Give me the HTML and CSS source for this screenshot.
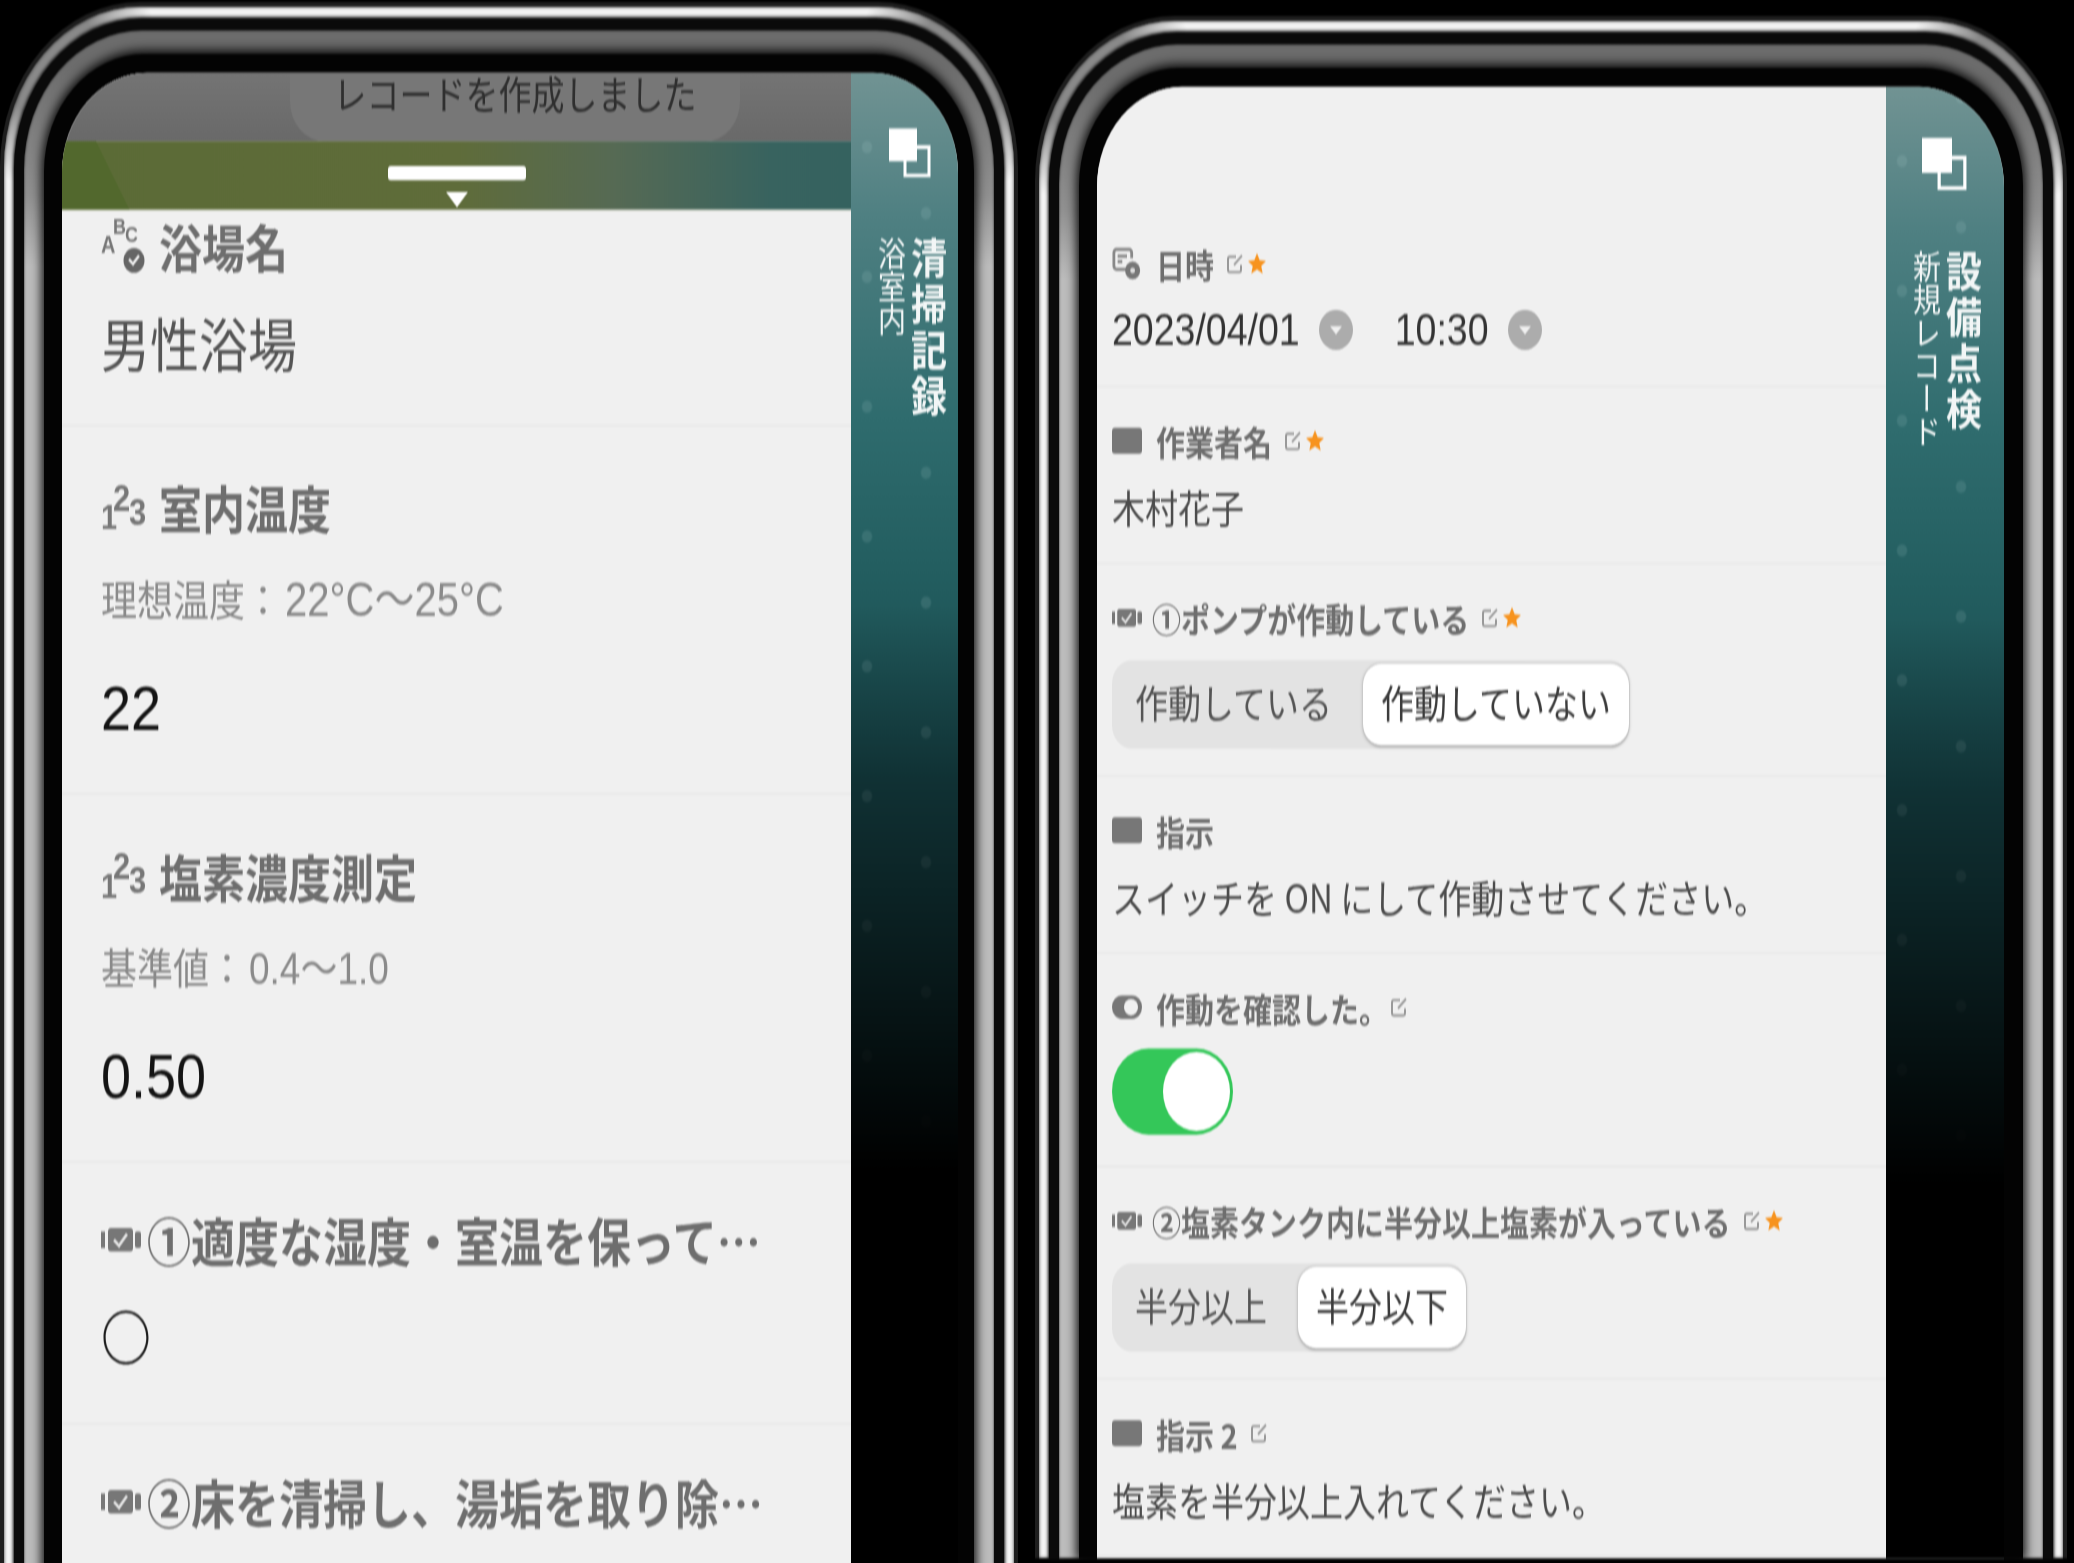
FILE: index.html
```html
<!DOCTYPE html>
<html lang="ja">
<head>
<meta charset="utf-8">
<title>記録</title>
<link rel="stylesheet" href="styles.css">
</head>
<body>
<svg class="defs" width="0" height="0" aria-hidden="true">
  <symbol id="i-check" viewBox="0 0 40 24">
    <rect x="0" y="5" width="4" height="14" fill="#777"/>
    <rect x="7" y="2" width="25" height="20" rx="3" fill="#777"/>
    <path d="M13 12l5 5 8-10" fill="none" stroke="#e4e4e4" stroke-width="2.6"/>
    <rect x="34" y="5" width="6" height="14" rx="2" fill="#777"/>
  </symbol>
  <symbol id="i-solid" viewBox="0 0 30 24">
    <rect x="0" y="1" width="30" height="22" rx="3" fill="#777"/>
  </symbol>
  <symbol id="i-date" viewBox="0 0 32 32">
    <path d="M15 21H5a3 3 0 0 1-3-3V6a3 3 0 0 1 3-3h13a3 3 0 0 1 3 3v5" fill="none" stroke="#888" stroke-width="3"/>
    <path d="M6 9h10M6 14h5" stroke="#888" stroke-width="3"/>
    <circle cx="22" cy="22" r="8" fill="#777"/>
    <circle cx="22" cy="22" r="2.5" fill="#ddd"/>
  </symbol>
  <symbol id="i-switch" viewBox="0 0 30 22">
    <rect x="0" y="1" width="30" height="20" rx="10" fill="#777"/>
    <circle cx="19" cy="11" r="7" fill="#f0f0f0"/>
  </symbol>
  <symbol id="i-edit" viewBox="0 0 18 18">
    <path d="M15 10v4a2 2 0 0 1-2 2H4a2 2 0 0 1-2-2V5a2 2 0 0 1 2-2h6" fill="none" stroke="#999" stroke-width="2"/>
    <path d="M8 10l8-8" stroke="#999" stroke-width="2"/>
  </symbol>
  <symbol id="i-star" viewBox="0 0 20 20">
    <path d="M10 1l2.7 6 6.3.6-4.8 4.2 1.5 6.4L10 14.8l-5.7 3.4 1.5-6.4L1 7.6 7.3 7z" fill="#f7931e"/>
  </symbol>
  <symbol id="i-caret" viewBox="0 0 34 34">
    <circle cx="17" cy="17" r="17" fill="#acacac"/>
    <path d="M11 14h12l-6 7z" fill="#f0f0f0"/>
  </symbol>
  <symbol id="i-copy" viewBox="0 0 42 42">
    <path d="M27 16h13v24H16V27" fill="none" stroke="#fff" stroke-width="3"/>
    <rect x="0" y="0" width="28" height="28" fill="#fff"/>
  </symbol>
</svg>

<section class="phone phone-left">
  <div class="ring ring-white">
    <div class="ring ring-black">
      <div class="ring ring-gray">
        <div class="ring bezel bezel-left">
          <div class="screen">
            <main class="main">
              <div class="toast-bar"><div class="toast">レコードを作成しました</div></div>
              <div class="banner"><span class="handle"></span><span class="handle-tip"></span></div>

              <div class="row-l row-first">
                <div class="label-l">
                  <svg class="ic-abc" viewBox="0 0 42 48">
                    <text x="0" y="31" class="ic-t" font-size="20">A</text>
                    <text x="12" y="15" class="ic-t" font-size="18">B</text>
                    <text x="24" y="21" class="ic-t" font-size="18">C</text>
                    <circle cx="33" cy="37" r="10.5" fill="#666"/>
                    <path d="M28 36l4 4 6-7" fill="none" stroke="#f0f0f0" stroke-width="2.4"/>
                  </svg>
                  <span>浴場名</span>
                </div>
                <div class="value-l">男性浴場</div>
              </div>
              <div class="row-l">
                <div class="label-l">
                  <svg class="ic-123" viewBox="0 0 46 44">
                    <text x="0" y="41" class="ic-t" font-size="29">1</text>
                    <text x="12" y="25" class="ic-t" font-size="31">2</text>
                    <text x="28" y="37" class="ic-t" font-size="31">3</text>
                  </svg>
                  <span>室内温度</span>
                </div>
                <div class="hint">理想温度：<span class="hint-wide">22°C〜25°C</span></div>
                <div class="num">22</div>
              </div>
              <div class="row-l">
                <div class="label-l">
                  <svg class="ic-123" viewBox="0 0 46 44">
                    <text x="0" y="41" class="ic-t" font-size="29">1</text>
                    <text x="12" y="25" class="ic-t" font-size="31">2</text>
                    <text x="28" y="37" class="ic-t" font-size="31">3</text>
                  </svg>
                  <span>塩素濃度測定</span>
                </div>
                <div class="hint">基準値：<span class="hint-num">0.4〜1.0</span></div>
                <div class="num">0.50</div>
              </div>
              <div class="row-l">
                <div class="label-l label-check"><svg class="ic-check-l"><use href="#i-check"/></svg><span>①適度な湿度・室温を保って…</span></div>
                <div class="mark">○</div>
              </div>
              <div class="row-l">
                <div class="label-l label-check"><svg class="ic-check-l"><use href="#i-check"/></svg><span>②床を清掃し、湯垢を取り除…</span></div>
              </div>
            </main>
            <aside class="side">
              <svg class="side-icon"><use href="#i-copy"/></svg>
              <div class="side-text"><div class="side-title">清掃記録</div><div class="side-sub">浴室内</div></div>
            </aside>
          </div>
        </div>
      </div>
    </div>
  </div>
</section>

<section class="phone phone-right">
  <div class="ring ring-white">
    <div class="ring ring-black">
      <div class="ring ring-gray">
        <div class="ring bezel bezel-right">
          <div class="screen">
            <main class="main">
              <div class="row-r row-date">
                <div class="label-r"><svg class="ic-r ic-date"><use href="#i-date"/></svg><span>日時</span><svg class="ic-edit"><use href="#i-edit"/></svg><svg class="ic-star"><use href="#i-star"/></svg></div>
                <div class="value-r datetime">
                  <span>2023/04/01</span><svg class="ic-caret"><use href="#i-caret"/></svg>
                  <span class="time">10:30</span><svg class="ic-caret"><use href="#i-caret"/></svg>
                </div>
              </div>
              <div class="row-r">
                <div class="label-r"><svg class="ic-r"><use href="#i-solid"/></svg><span>作業者名</span><svg class="ic-edit"><use href="#i-edit"/></svg><svg class="ic-star"><use href="#i-star"/></svg></div>
                <div class="value-r">木村花子</div>
              </div>
              <div class="row-r row-seg">
                <div class="label-r label-tight"><svg class="ic-r"><use href="#i-check"/></svg><span>①ポンプが作動している</span><svg class="ic-edit"><use href="#i-edit"/></svg><svg class="ic-star"><use href="#i-star"/></svg></div>
                <div class="seg"><div class="seg-off">作動している</div><div class="seg-on">作動していない</div></div>
              </div>
              <div class="row-r">
                <div class="label-r"><svg class="ic-r"><use href="#i-solid"/></svg><span>指示</span></div>
                <div class="value-r">スイッチを ON にして作動させてください。</div>
              </div>
              <div class="row-r row-toggle">
                <div class="label-r label-period"><svg class="ic-r"><use href="#i-switch"/></svg><span>作動を確認した。</span><svg class="ic-edit"><use href="#i-edit"/></svg></div>
                <div class="toggle"><span class="knob"></span></div>
              </div>
              <div class="row-r row-seg">
                <div class="label-r label-tight"><svg class="ic-r"><use href="#i-check"/></svg><span>②塩素タンク内に半分以上塩素が入っている</span><svg class="ic-edit"><use href="#i-edit"/></svg><svg class="ic-star"><use href="#i-star"/></svg></div>
                <div class="seg"><div class="seg-off">半分以上</div><div class="seg-on">半分以下</div></div>
              </div>
              <div class="row-r">
                <div class="label-r"><svg class="ic-r"><use href="#i-solid"/></svg><span>指示 2</span><svg class="ic-edit"><use href="#i-edit"/></svg></div>
                <div class="value-r">塩素を半分以上入れてください。</div>
              </div>
            </main>
            <aside class="side side-right">
              <svg class="side-icon"><use href="#i-copy"/></svg>
              <div class="side-text"><div class="side-title">設備点検</div><div class="side-sub">新規レコード</div></div>
            </aside>
          </div>
        </div>
      </div>
    </div>
  </div>
</section>
</body>
</html>
```

FILE: styles.css
```css
* { box-sizing: border-box; }
html, body { height: 1563px; overflow: hidden; }
body {
  margin: 0;
  background: #000;
  display: flex;
  gap: 17px;
  align-items: flex-start;
  font-family: "Noto Sans CJK JP", "Liberation Sans", sans-serif;
}
.defs { position: absolute; }
.ic-t { font-family: "Liberation Sans", sans-serif; fill: #777; }

/* Device frame: the whole photograph is stretched vertically */
.phone {
  flex: none;
  display: flex;
  padding: 4px 4px 0;
  background: #1e1e1e;
  border-radius: 140px 140px 0 0;
  transform: scaleY(1.18);
  transform-origin: top;
  filter: blur(0.7px);
}
.phone-left { width: 1018px; height: 1400px; margin-top: 2px; }
.phone-right { width: 1032px; height: 1307px; margin-top: 16px; }
.ring { display: flex; flex: 1; min-width: 0; }
.ring-white {
  background:
    radial-gradient(circle 110px at 45px 45px, #8a8a8a 45%, transparent 100%),
    radial-gradient(circle 110px at calc(100% - 45px) 45px, #8a8a8a 45%, transparent 100%),
    #f4f4f4;
  padding: 10px 10px 0;
  border-radius: 136px 136px 0 0;
  box-shadow: inset 0 0 3px #222;
}
.ring-black {
  background: #0a0a0a;
  padding: 10px 10px 0;
  border-radius: 128px 128px 0 0;
  box-shadow: 0 0 3px 1px #0a0a0a;
}
.ring-gray {
  background: linear-gradient(#6c6c6c, #6c6c6c 30px, #909090 140px, #bcbcbc 200px);
  padding: 20px 20px 0;
  border-radius: 118px 118px 0 0;
  box-shadow: inset 0 0 2px #000;
}
.bezel {
  background: #030303;
  padding: 16px 18px 0;
  border-radius: 100px 100px 0 0;
  box-shadow: 0 0 10px 2px #000;
}
.bezel-left { padding-right: 16px; }
.bezel-right { padding-right: 19px; }
.screen {
  flex: 1;
  display: flex;
  min-width: 0;
  overflow: hidden;
  border-radius: 85px 85px 0 0;
  background: #f0f0f0;
}
.main { flex: 1; min-width: 0; background: #f0f0f0; }

/* Toast & banner (left) */
.toast-bar {
  height: 58px;
  background: linear-gradient(#747474, #696969);
  padding-left: 228px;
}
.toast {
  width: 450px;
  height: 58px;
  background: #777;
  border-radius: 0 0 34px 34px;
  text-align: center;
  font-size: 33px;
  line-height: 35px;
  color: #2f2f2f;
}
.banner {
  height: 59px;
  background:
    linear-gradient(60deg, #52682d 0 58px, transparent 59px),
    linear-gradient(90deg, #5b6b36 0%, #5f6c3a 50%, #566a54 70%, #38635f 90%, #35625f 100%);
  display: flex;
  flex-direction: column;
  align-items: center;
  padding-top: 21px;
  border-bottom: 1px solid #cfd2c4;
}
.handle { width: 138px; height: 12px; background: #fff; border-radius: 3px; }
.handle-tip {
  margin-top: 10px;
  width: 0;
  height: 0;
  border-left: 11px solid transparent;
  border-right: 11px solid transparent;
  border-top: 13px solid #fff;
}

/* Rows (left) */
.row-l {
  padding: 43px 39px 42px;
  border-bottom: 2px solid #eaeaea;
}
.row-first { padding-top: 4px; }
.label-l {
  display: flex;
  align-items: center;
  gap: 16px;
  height: 50px;
  margin-bottom: 2px;
  font-size: 43px;
  line-height: 50px;
  font-weight: 700;
  color: #6e6e6e;
  white-space: nowrap;
}
.label-check { gap: 6px; font-size: 44px; margin-top: -3px; margin-bottom: 5px; }
.ic-abc { width: 42px; height: 48px; flex: none; overflow: visible; }
.ic-123 { width: 46px; height: 44px; flex: none; margin-right: -4px; overflow: visible; }
.ic-check-l { width: 40px; height: 24px; flex: none; }
.value-l { margin-top: 27px; margin-bottom: -2px; font-size: 49px; line-height: 60px; color: #555; }
.hint { height: 44px; margin-top: 29px; font-size: 36px; line-height: 44px; color: #8a8a8a; white-space: nowrap; }
.hint-wide { font-family: "Liberation Sans", "Noto Sans CJK JP", sans-serif; font-size: 40px; margin-left: 4px; }
.hint-num { font-family: "Liberation Sans", "Noto Sans CJK JP", sans-serif; font-size: 37px; margin-left: 4px; }
.num { margin-top: 25px; font-family: "Liberation Sans", "Noto Sans CJK JP", sans-serif; font-size: 54px; line-height: 60px; color: #141414; }
.hint + .num { margin-top: 42px; }
.mark { margin-top: 25px; margin-bottom: 3px; font-size: 50px; line-height: 60px; font-weight: 700; color: #1c1c1c; }

/* Rows (right) */
.row-r {
  padding: 28px 15px 28px;
  border-bottom: 2px solid #eaeaea;
}
.row-date { padding-top: 133px; }
.row-seg { padding-bottom: 22px; }
.row-toggle { padding-bottom: 26px; }
.label-r {
  display: flex;
  align-items: center;
  height: 34px;
  font-size: 29px;
  line-height: 34px;
  font-weight: 700;
  color: #6e6e6e;
  white-space: nowrap;
}
.ic-r { width: 30px; height: 24px; flex: none; margin-right: 14px; }
.ic-date { height: 30px; }
.label-tight .ic-r { margin-right: 10px; }
.ic-edit { width: 18px; height: 18px; flex: none; margin-left: 12px; }
.label-period .ic-edit { margin-left: 2px; }
.ic-star { width: 20px; height: 20px; flex: none; margin-left: 3px; }
.value-r {
  margin-top: 20px;
  font-size: 33px;
  line-height: 38px;
  color: #4c4c4c;
  white-space: nowrap;
}
.datetime {
  display: flex;
  align-items: center;
  font-family: "Liberation Sans", sans-serif;
  font-size: 37.5px;
  color: #333;
}
.ic-caret { width: 34px; height: 34px; flex: none; margin-left: 19px; }
.time { margin-left: 42px; }

.seg {
  display: inline-flex;
  margin-top: 19px;
  height: 75px;
  padding: 3px 1px 3px 0;
  background: #e3e3e3;
  border-radius: 20px;
  font-size: 33px;
  vertical-align: top;
}
.seg-off { display: flex; align-items: center; padding: 0 31px 5px 23px; color: #555; }
.seg-on {
  display: flex;
  align-items: center;
  padding: 0 18px 5px;
  background: #fff;
  border-radius: 18px;
  color: #3c3c3c;
  box-shadow: 0 1px 3px rgba(0, 0, 0, .3);
}
.toggle {
  width: 121px;
  height: 73px;
  margin-top: 18px;
  padding: 3px;
  display: flex;
  justify-content: flex-end;
  background: #34c759;
  border-radius: 37px;
}
.knob { width: 67px; height: 67px; border-radius: 50%; background: #fff; }

/* Side panel */
.side {
  flex: none;
  width: 107px;
  padding-top: 47px;
  display: flex;
  flex-direction: column;
  background:
    linear-gradient(rgba(0,0,0,0) 450px, #000 930px),
    radial-gradient(circle 6px at 16px 63px, rgba(190,220,220,.13) 70%, transparent 100%) 0 0 / 120px 110px,
    radial-gradient(circle 6px at 75px 9px, rgba(190,220,220,.13) 70%, transparent 100%) 0 0 / 120px 110px,
    linear-gradient(#719393 0, #4f8082 120px, #2f6c6e 290px, #235e60 420px, #17474b 600px);
}
.side-right { width: 118px; }
.side-icon { width: 42px; height: 42px; margin-left: 38px; flex: none; }
.side-right .side-icon { width: 45px; height: 45px; margin-left: 36px; margin-top: -4px; }
.side-text {
  writing-mode: vertical-rl;
  align-self: flex-start;
  margin: 50px 0 0 24px;
  color: #f2f6f6;
}
.side-title { font-size: 36px; line-height: 40px; font-weight: 700; letter-spacing: 3px; }
.side-sub { font-size: 28px; line-height: 34px; }
```
